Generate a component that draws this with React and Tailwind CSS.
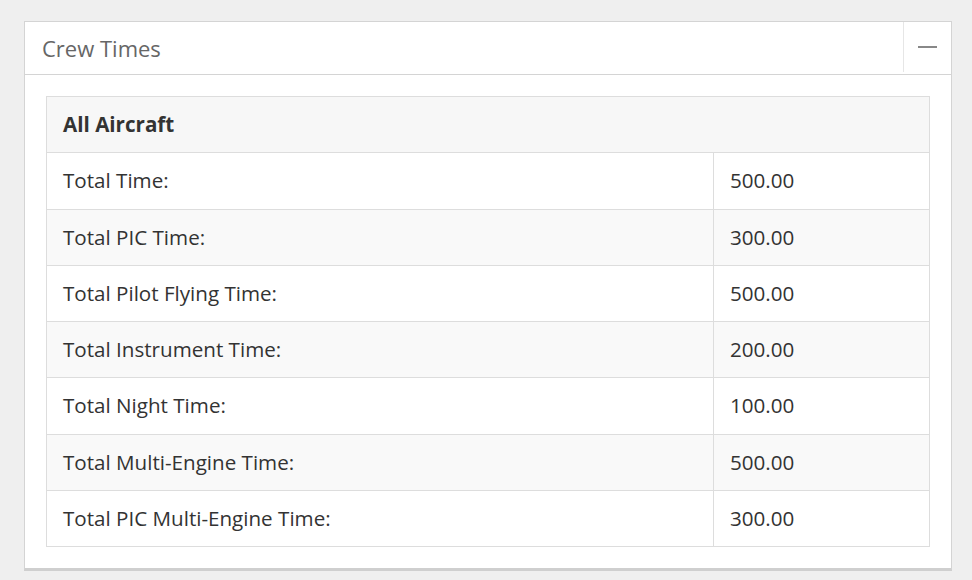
const rows = [
  ["Total Time:", "500.00"],
  ["Total PIC Time:", "300.00"],
  ["Total Pilot Flying Time:", "500.00"],
  ["Total Instrument Time:", "200.00"],
  ["Total Night Time:", "100.00"],
  ["Total Multi-Engine Time:", "500.00"],
  ["Total PIC Multi-Engine Time:", "300.00"],
];

const App = () => {
  return (
    <div
      className="min-h-screen bg-[#efefef] pl-[24px] pr-[20px] pt-[21px]"
      style={{ fontFamily: '"Open Sans", "Liberation Sans", sans-serif' }}
    >
      {/* Panel */}
      <div className="bg-white border border-[#d4d4d4] border-b-[3px] border-b-[#cfcfcf]">
        <div className="flex items-stretch h-[53px] border-b border-[#d4d4d4]">
          <h2 className="flex-1 flex items-center pl-[17px] text-[22px] text-[#666]">Crew Times</h2>
          <button className="w-[48px] flex items-center justify-center border-l border-[#e6e6e6] mb-[2px]">
            <span className="block w-[19px] h-[2px] bg-[#888]" />
          </button>
        </div>

        {/* Body */}
        <div className="px-[21px] pt-[21px] pb-[21px]">
          <table className="w-full border-collapse border border-[#ddd] text-[20.6px] text-[#333]">
            <thead>
              <tr className="bg-[#f7f7f7]">
                <th colSpan={2} className="text-left font-bold px-[16px] py-[15px] leading-[25.25px]">
                  All Aircraft
                </th>
              </tr>
            </thead>
            <tbody>
              {rows.map(([label, value], i) => (
                <tr key={label} className={i % 2 === 1 ? "bg-[#f9f9f9]" : "bg-white"}>
                  <td className="border-t border-[#ddd] px-[16px] py-[15px] leading-[25.25px]">{label}</td>
                  <td className="w-[216px] border-t border-l border-[#ddd] px-[16px] py-[15px] leading-[25.25px]">
                    {value}
                  </td>
                </tr>
              ))}
            </tbody>
          </table>
        </div>
      </div>
    </div>
  );
};

export default App;
